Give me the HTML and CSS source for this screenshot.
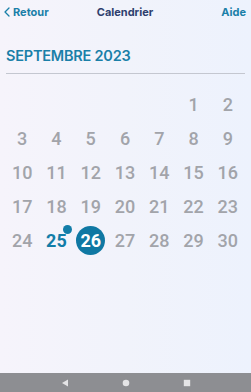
FILE: index.html
```html
<!DOCTYPE html>
<html lang="fr">
<head>
<meta charset="utf-8">
<title>Calendrier</title>
<link rel="stylesheet" href="styles.css">
</head>
<body>
<div class="screen">
  <header class="topbar">
    <a class="back">
      <svg class="chev" width="6" height="10" viewBox="0 0 6 10"><path d="M5 1 L1 5 L5 9" fill="none" stroke="currentColor" stroke-width="1.3" stroke-linecap="round" stroke-linejoin="round"/></svg>
      <span>Retour</span>
    </a>
    <div class="title">Calendrier</div>
    <a class="help">Aide</a>
  </header>
  <main class="content">
    <h1 class="month">SEPTEMBRE 2023</h1>
    <div class="rule"></div>
    <div class="grid">
      <span></span><span></span><span></span><span></span><span></span>
      <span class="d">1</span><span class="d">2</span>
      <span class="d">3</span><span class="d">4</span><span class="d">5</span><span class="d">6</span><span class="d">7</span><span class="d">8</span><span class="d">9</span>
      <span class="d">10</span><span class="d">11</span><span class="d">12</span><span class="d">13</span><span class="d">14</span><span class="d">15</span><span class="d">16</span>
      <span class="d">17</span><span class="d">18</span><span class="d">19</span><span class="d">20</span><span class="d">21</span><span class="d">22</span><span class="d">23</span>
      <span class="d">24</span><span class="d today">25<i class="dot"></i></span><span class="d sel"><b class="circle">26</b></span><span class="d">27</span><span class="d">28</span><span class="d">29</span><span class="d">30</span>
    </div>
  </main>
  <nav class="sysnav">
    <svg width="8" height="8" viewBox="0 0 8 8"><path d="M7 0.5 L7 7.5 L1 4 Z" fill="#e4e4e6"/></svg>
    <svg width="8" height="8" viewBox="0 0 8 8"><circle cx="4" cy="4" r="3.3" fill="#e4e4e6"/></svg>
    <svg width="8" height="8" viewBox="0 0 8 8"><rect x="0.8" y="0.8" width="6.4" height="6.4" fill="#e4e4e6"/></svg>
  </nav>
</div>
</body>
</html>
```
FILE: styles.css
```css
* { box-sizing: border-box; }
html, body { margin: 0; padding: 0; }
body { width: 251px; height: 392px; overflow: hidden; font-family: Inter, "Noto Sans", sans-serif; }
.screen {
  width: 251px; height: 392px;
  display: flex; flex-direction: column;
  background: linear-gradient(90deg, #f6f4fb 0%, #f1f3fb 50%, #edf2fd 100%);
}
.topbar {
  height: 24px;
  display: flex; align-items: center; justify-content: space-between;
  padding: 0 5px 0 4px;
  font-size: 11px; font-weight: 700;
}
.back { display: flex; align-items: center; gap: 3px; color: #1a7fa8; width: 50px; }
.chev { display: block; }
.title { color: #2e3f6e; font-weight: 700; }
.help { color: #1a7fa8; width: 50px; text-align: right; }
.content { flex: 1; padding: 24px 6px 0 5px; }
.month {
  margin: 0 0 0 1px;
  font-size: 14.5px; font-weight: 600; letter-spacing: -0.22px;
  color: #1a7fa8; line-height: 16px;
}
.rule { height: 1px; background: #c4c7d0; margin: 9px 0 0 1px; }
.grid {
  display: grid;
  grid-template-columns: repeat(7, 1fr);
  grid-auto-rows: 34px;
  margin-top: 13px;
}
.d {
  display: flex; align-items: center; justify-content: center;
  font-family: Roboto, sans-serif; font-size: 18px; font-weight: 500;
  color: #a2a4aa; position: relative;
}
.today { color: #127da8; font-weight: 700; }
.dot {
  position: absolute; width: 9px; height: 9px; border-radius: 50%;
  background: #127da8; left: 24px; top: 2px;
}
.circle {
  width: 29px; height: 29px; border-radius: 50%;
  background: #0f78a3; color: #fff;
  display: flex; align-items: center; justify-content: center;
  font-weight: 700; font-size: 18px;
}
.sysnav {
  height: 19px; background: #8d8e92;
  display: flex; align-items: center; justify-content: center; gap: 53px;
}
.sysnav svg { display: block; }
```
